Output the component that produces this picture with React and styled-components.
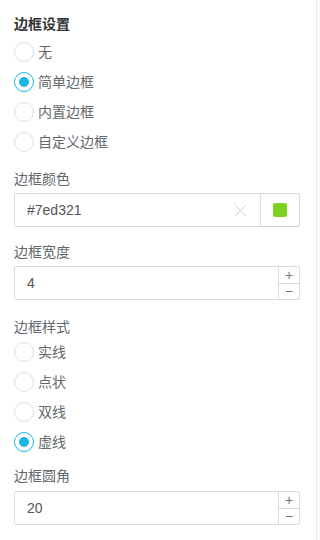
import React, { useState } from 'react';
import styled, { createGlobalStyle } from 'styled-components';

const GlobalStyle = createGlobalStyle`
    html, body {
        margin: 0;
        padding: 0;
        background: #fff;
    }
    body {
        font-family: "Liberation Sans", "Noto Sans CJK SC", sans-serif;
    }
`;

const App = () => {
    const [frame, setFrame] = useState('simple');
    const [lineStyle, setLineStyle] = useState('dashed');
    const [color, setColor] = useState('#7ed321');
    const [width, setWidth] = useState(4);
    const [radius, setRadius] = useState(20);

    const frameOptions = [
        ['none', '无'],
        ['simple', '简单边框'],
        ['inner', '内置边框'],
        ['custom', '自定义边框'],
    ];
    const styleOptions = [
        ['solid', '实线'],
        ['dotted', '点状'],
        ['double', '双线'],
        ['dashed', '虚线'],
    ];

    return (
        <>
            <GlobalStyle />
            <Panel>
                <Title>边框设置</Title>
                <RadioGroup $top={3}>
                    {frameOptions.map(([value, text]) => (
                        <RadioRow key={value} onClick={() => setFrame(value)}>
                            <RadioCircle $checked={frame === value} />
                            <span>{text}</span>
                        </RadioRow>
                    ))}
                </RadioGroup>

                <Label $top={12}>边框颜色</Label>
                <InputBox>
                    <TextInput value={color} onChange={e => setColor(e.target.value)} />
                    <ClearButton onClick={() => setColor('')}>
                        <svg width="13" height="13" viewBox="0 0 13 13">
                            <path d="M1 1L12 12M12 1L1 12" stroke="#c5d1d4" strokeWidth="1" fill="none" />
                        </svg>
                    </ClearButton>
                    <Swatch>
                        <SwatchColor style={{ background: color || '#fff' }} />
                    </Swatch>
                </InputBox>

                <Label $top={15}>边框宽度</Label>
                <NumberField value={width} onChange={setWidth} />

                <Label $top={17}>边框样式</Label>
                <RadioGroup $top={-4}>
                    {styleOptions.map(([value, text]) => (
                        <RadioRow key={value} onClick={() => setLineStyle(value)}>
                            <RadioCircle $checked={lineStyle === value} />
                            <span>{text}</span>
                        </RadioRow>
                    ))}
                </RadioGroup>

                <Label $top={9} $bottom={5}>边框圆角</Label>
                <NumberField value={radius} onChange={setRadius} />
            </Panel>
        </>
    );
};

const NumberField = ({ value, onChange }) => (
    <InputBox>
        <TextInput value={value} onChange={e => onChange(e.target.value)} />
        <Stepper>
            <StepButton onClick={() => onChange(Number(value) + 1)}>+</StepButton>
            <StepButton onClick={() => onChange(Number(value) - 1)}>−</StepButton>
        </Stepper>
    </InputBox>
);

const Panel = styled.div`
    box-sizing: border-box;
    width: 317px;
    height: 540px;
    padding: 14px 16px 0 14px;
    border-right: 1px solid #e6eaeb;
    background: #fff;
`;

const Title = styled.div`
    font-size: 14px;
    line-height: 20px;
    font-weight: bold;
    color: #333;
`;

const Label = styled.div`
    margin-top: ${p => p.$top || 0}px;
    margin-bottom: ${p => p.$bottom ?? 4}px;
    font-size: 14px;
    line-height: 20px;
    color: #62686c;
`;

const RadioGroup = styled.div`
    margin-top: ${p => p.$top || 0}px;
    display: flex;
    flex-direction: column;
`;

const RadioRow = styled.label`
    display: flex;
    align-items: center;
    gap: 4px;
    height: 30px;
    font-size: 14px;
    line-height: 20px;
    color: #62686c;
    cursor: pointer;
`;

const RadioCircle = styled.span`
    box-sizing: border-box;
    flex-shrink: 0;
    position: relative;
    width: 20px;
    height: 20px;
    border-radius: 50%;
    border: ${p => (p.$checked ? '1.5px solid #1bb5e4' : '1px solid #d3dfe2')};
    background: #fff;

    &::after {
        content: '';
        display: ${p => (p.$checked ? 'block' : 'none')};
        position: absolute;
        top: 50%;
        left: 50%;
        width: 10px;
        height: 10px;
        margin: -5px 0 0 -5px;
        border-radius: 50%;
        background: #1bb5e4;
    }
`;

const InputBox = styled.div`
    box-sizing: border-box;
    display: flex;
    align-items: stretch;
    height: 34px;
    border: 1px solid #d2dee0;
    border-radius: 2px;
    background: #fff;
`;

const TextInput = styled.input`
    flex: 1;
    min-width: 0;
    border: none;
    outline: none;
    padding: 0 0 0 12px;
    font-family: "Liberation Sans", "Noto Sans CJK SC", sans-serif;
    font-size: 14px;
    color: #555;
    background: transparent;
`;

const ClearButton = styled.div`
    display: flex;
    align-items: center;
    justify-content: center;
    width: 30px;
    margin-right: 5px;
    cursor: pointer;
`;

const Swatch = styled.div`
    display: flex;
    align-items: center;
    justify-content: center;
    width: 38px;
    border-left: 1px solid #d2dee0;
    box-shadow: 0 1px 1px rgba(0, 0, 0, 0.06);
`;

const SwatchColor = styled.span`
    width: 14px;
    height: 14px;
    border-radius: 2px;
`;

const Stepper = styled.div`
    display: flex;
    flex-direction: column;
    width: 20px;
    border-left: 1px solid #d2dee0;
`;

const StepButton = styled.div`
    flex: 1;
    display: flex;
    align-items: center;
    justify-content: center;
    font-size: 14px;
    line-height: 1;
    color: #777;
    cursor: pointer;

    & + & {
        border-top: 1px solid #d2dee0;
    }
`;

export default App;
